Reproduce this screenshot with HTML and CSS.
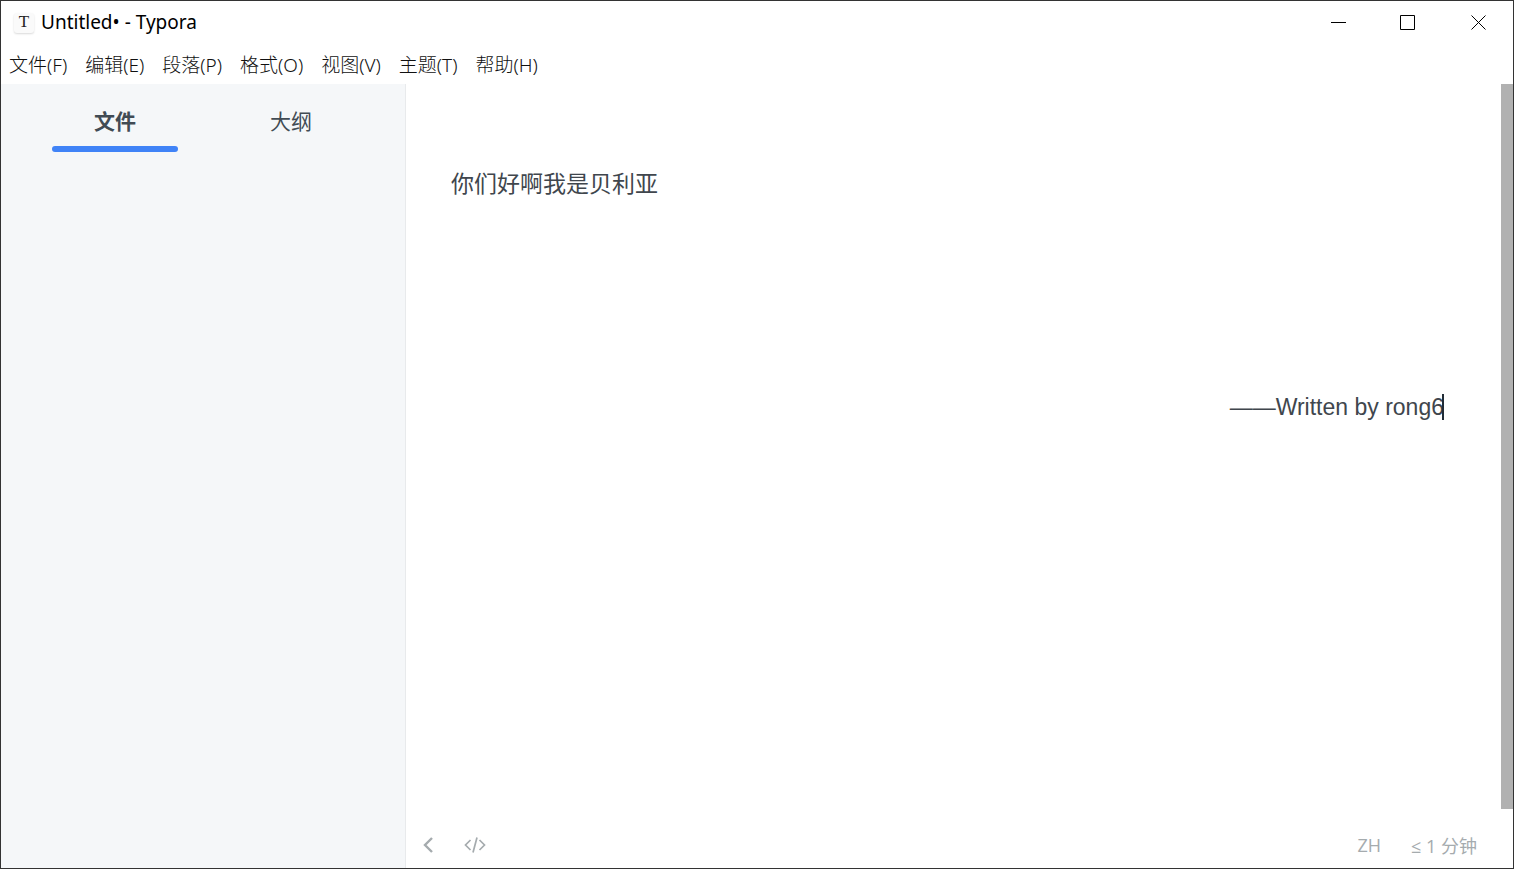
FILE: index.html
```
<!DOCTYPE html>
<html lang="zh-CN">

<head>
    <meta charset="UTF-8">
    <meta name="viewport" content="width=device-width, initial-scale=1.0">
    <title>Untitled• - Typora</title>
    <link rel="stylesheet" href="styles.css">
</head>

<body>
    <div class="window">
        <header class="title-bar">
            <span class="app-icon">T</span>
            <h1 class="title">Untitled• - Typora</h1>
            <div class="window-controls">
                <button type="button" class="window-btn" aria-label="最小化">
                    <svg width="16" height="16" viewBox="0 0 16 16"><path d="M1 7.5h15" /></svg>
                </button>
                <button type="button" class="window-btn" aria-label="最大化">
                    <svg width="16" height="16" viewBox="0 0 16 16"><path d="M.5 .5h14v14h-14z" /></svg>
                </button>
                <button type="button" class="window-btn" aria-label="关闭">
                    <svg width="16" height="16" viewBox="0 0 16 16"><path d="M1.500 .5l14 14M15.500 .5l-14 14" /></svg>
                </button>
            </div>
        </header>

        <nav class="menu-bar">
            <button type="button" class="menu-item">文件(F)</button>
            <button type="button" class="menu-item">编辑(E)</button>
            <button type="button" class="menu-item">段落(P)</button>
            <button type="button" class="menu-item">格式(O)</button>
            <button type="button" class="menu-item">视图(V)</button>
            <button type="button" class="menu-item">主题(T)</button>
            <button type="button" class="menu-item">帮助(H)</button>
        </nav>

        <div class="content">
            <aside class="sidebar">
                <div class="tabs">
                    <button type="button" class="tab active">文件</button>
                    <button type="button" class="tab">大纲</button>
                </div>
            </aside>

            <div class="main">
                <div class="editor">
                    <main class="document" contenteditable="true" spellcheck="false">
                        <p>你们好啊我是贝利亚</p>
                        <p class="signature">——Written by rong6<span class="caret"></span></p>
                    </main>
                    <div class="scrollbar"></div>
                </div>
                <footer class="status-bar">
                    <button type="button" class="status-btn" aria-label="侧边栏">
                        <svg width="12" height="18" viewBox="0 0 12 18"><path d="M10 2L3 9l7 7" stroke-width="2.4" /></svg>
                    </button>
                    <button type="button" class="status-btn source" aria-label="源代码模式">
                        <svg width="22" height="18" viewBox="0 0 22 18"><path d="M6.500 4L1.500 9l5 5M15.500 4l5 5-5 5M13 1.500L9 16.500" stroke-width="1.700" /></svg>
                    </button>
                    <button type="button" class="status-btn">ZH</button>
                    <button type="button" class="status-btn">≤ 1 分钟</button>
                </footer>
            </div>
        </div>
    </div>
</body>

</html>
```

FILE: styles.css
```
* {
    box-sizing: border-box;
}
body {
    margin: 0;
    font-family: "Noto Sans", "Noto Sans CJK SC", sans-serif;
    background-color: white;
}
button {
    padding: 0;
    border: none;
    background: none;
    font-family: inherit;
    color: inherit;
}
svg {
    display: block;
    fill: none;
    stroke: currentColor;
}
.window {
    display: flex;
    flex-direction: column;
    height: 100vh;
    border: 1px solid #333;
}

/* title bar */
.title-bar {
    display: flex;
    align-items: center;
    height: 43px;
    padding-left: 13px;
    color: black;
}
.app-icon {
    width: 20px;
    height: 20px;
    margin-right: 7px;
    border-radius: 3px;
    background-color: #fafafa;
    box-shadow: 0 1px 2px rgba(0, 0, 0, 0.15);
    font: 17px/18px "Liberation Serif", serif;
    color: #222;
    text-align: center;
}
.title {
    margin: 0;
    padding-bottom: 2px;
    font-size: 19px;
    font-weight: normal;
}
.window-controls {
    display: flex;
    height: 100%;
    margin-left: auto;
}
.window-btn {
    display: flex;
    align-items: center;
    justify-content: center;
    width: 70px;
}

/* menu bar */
.menu-bar {
    display: flex;
    align-items: center;
    gap: 18px;
    height: 40px;
    padding: 0 8px;
}
.menu-item {
    font-size: 19px;
    font-weight: 300;
    color: #111;
}

.content {
    display: flex;
    flex: 1;
    min-height: 0;
}

/* sidebar */
.sidebar {
    width: 405px;
    padding: 16px 26px;
    border-right: 1px solid #e8eaec;
    background-color: #f5f7f9;
}
.tabs {
    display: grid;
    grid-template-columns: 1fr 1fr;
}
.tab {
    height: 52px;
    margin: 0 25px;
    padding-bottom: 6px;
    border-bottom: 6px solid transparent;
    font-size: 21px;
    color: #414b54;
}
.tab.active {
    position: relative;
    font-weight: bold;
}
.tab.active::after {
    content: "";
    position: absolute;
    left: 0;
    right: 0;
    bottom: -6px;
    height: 6px;
    border-radius: 3px;
    background-color: #4083f7;
}

/* editor */
.main {
    display: flex;
    flex: 1;
    flex-direction: column;
    min-width: 0;
}
.editor {
    display: flex;
    flex: 1;
    min-height: 0;
}
.document {
    flex: 1;
    padding: 82px 57px 0 45px;
    outline: none;
    font-family: "Liberation Sans", "Noto Sans CJK SC", sans-serif;
    font-size: 23px;
    line-height: 36px;
    color: #40464d;
}
.document p {
    margin: 0;
}
.document .signature {
    margin-top: 187px;
    text-align: right;
}
.caret {
    display: inline-block;
    width: 2px;
    height: 26px;
    margin-left: -2px;
    background-color: #222c36;
    vertical-align: text-bottom;
}
.scrollbar {
    width: 12px;
    background-color: #b1b1b1;
}

/* status bar */
.status-bar {
    display: flex;
    align-items: center;
    gap: 30px;
    height: 59px;
    padding: 12px 36px 0 16px;
    font-family: "Open Sans", "Noto Sans CJK SC", sans-serif;
    color: #a5abae;
}
.status-btn {
    font-size: 18px;
}
.source {
    margin-right: auto;
}
```
